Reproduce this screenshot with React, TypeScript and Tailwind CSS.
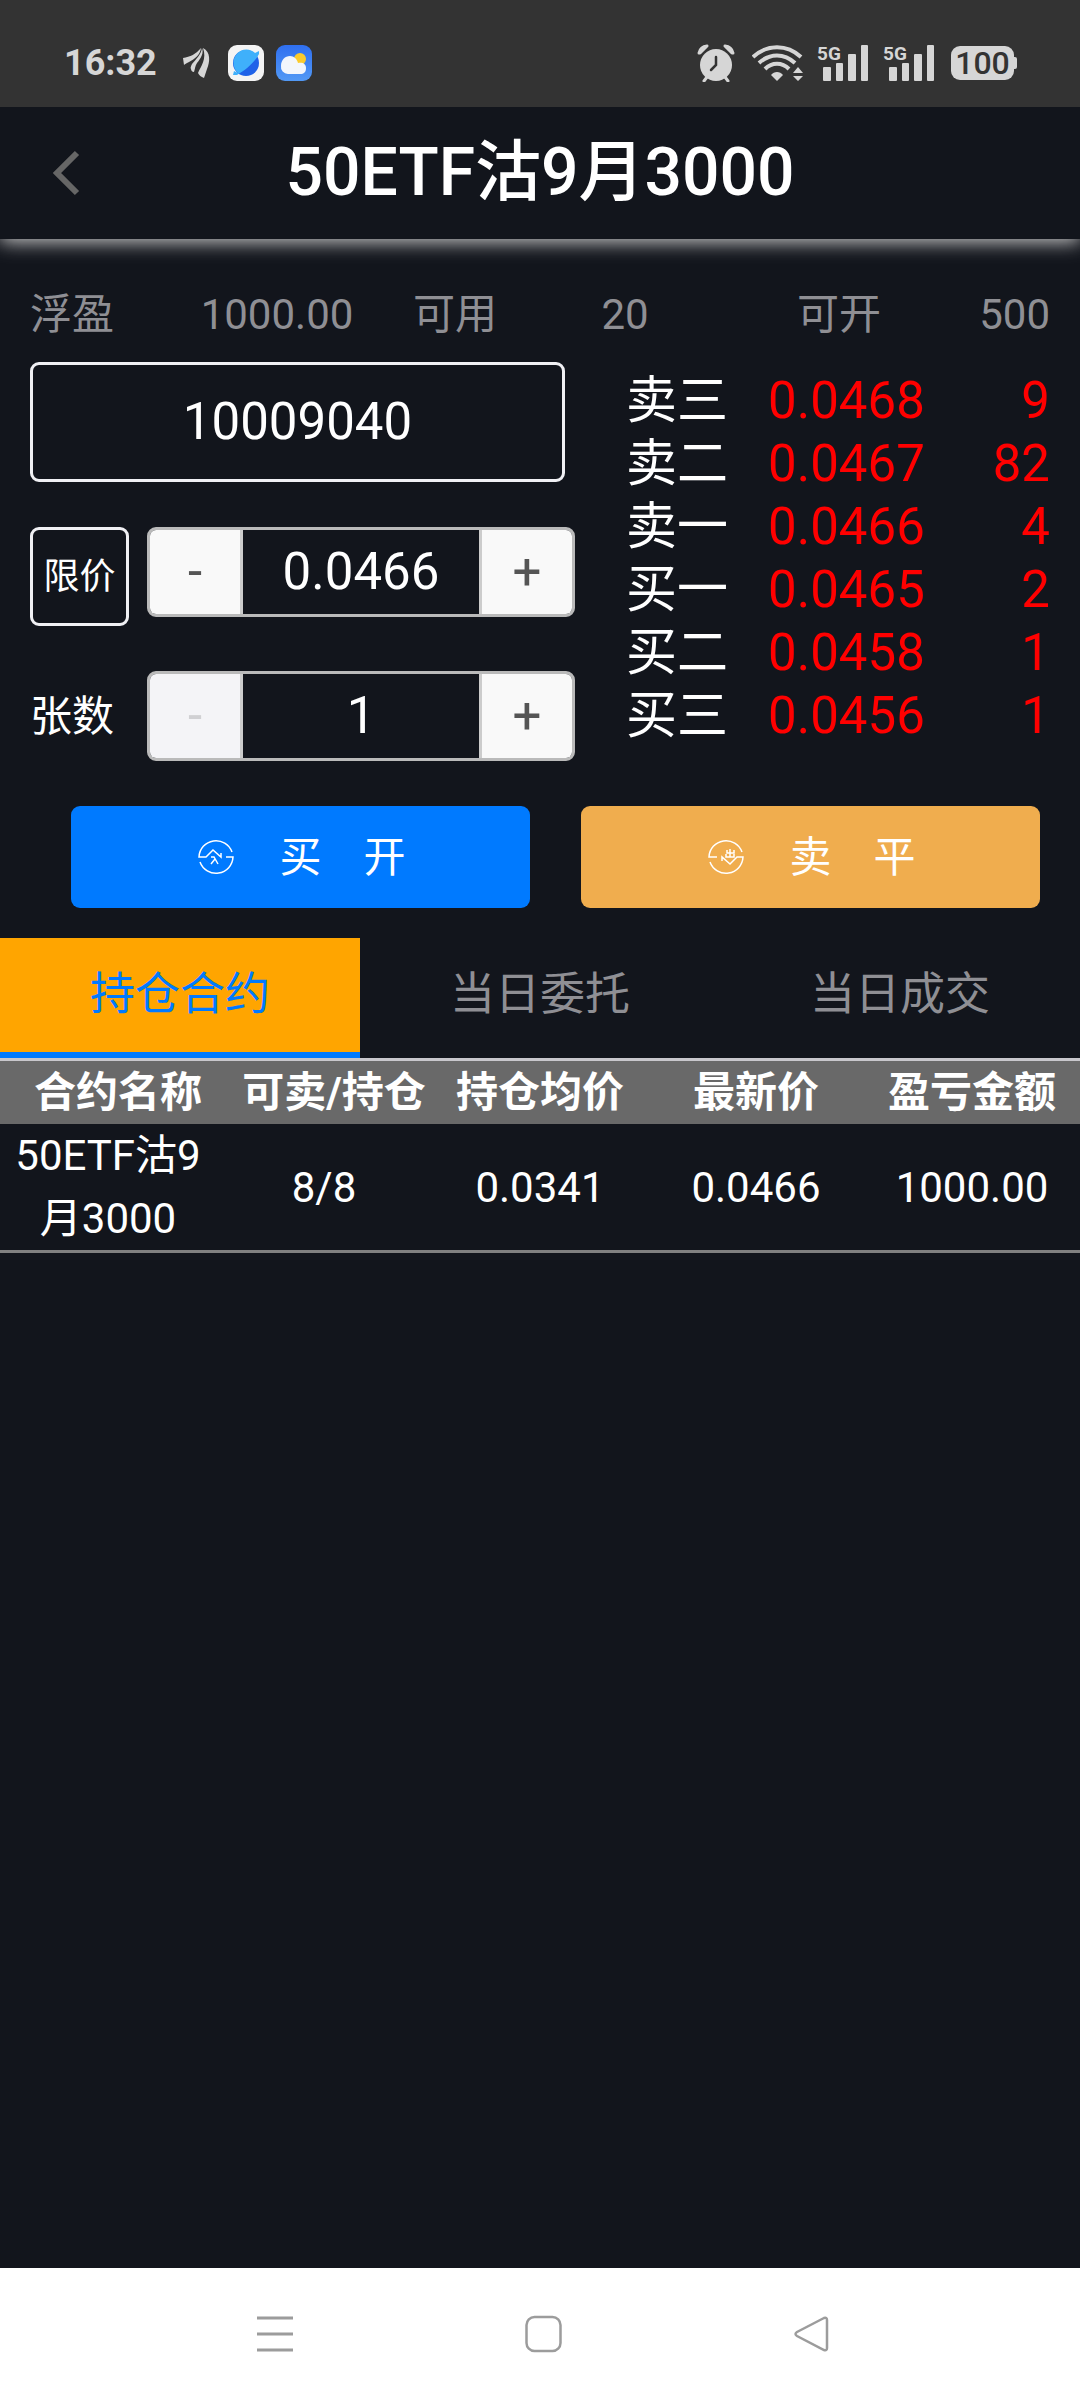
import { useState } from 'react';

const positions = [
    { name: '50ETF沽9月3000', amount: '8/8', avg: '0.0341', last: '0.0466', profit: '1000.00' },
];

const quotes = [
    { label: '卖三', price: '0.0468', volume: 9 },
    { label: '卖二', price: '0.0467', volume: 82 },
    { label: '卖一', price: '0.0466', volume: 4 },
    { label: '买一', price: '0.0465', volume: 2 },
    { label: '买二', price: '0.0458', volume: 1 },
    { label: '买三', price: '0.0456', volume: 1 },
];

const tabs = ['持仓合约', '当日委托', '当日成交'];

function Signal() {
    return (
        <svg className="overflow-visible" width="52" height="38" viewBox="0 0 52 38" fill="#d6d6d6" aria-hidden="true">
            <text x="0" y="16" fontSize="19" fontWeight="700" fontFamily="Roboto, sans-serif">5G</text>
            <rect x="6" y="23" width="8" height="14" rx="1" />
            <rect x="19" y="19" width="7" height="18" rx="1" />
            <rect x="31" y="10" width="8" height="27" rx="1" />
            <rect x="44" y="1" width="7" height="36" rx="1" />
        </svg>
    );
}

function StatusBar() {
    return (
        <div className="relative z-10 flex h-[107px] items-center justify-between bg-[#333333] pr-[63px] pl-[64px] pt-[18px] text-[#d6d6d6]">
            <div className="flex items-center">
                <span className="text-[36px] font-bold leading-[38px]">16:32</span>
                <svg className="ml-[26px]" width="28" height="32" viewBox="0 0 28 32" fill="#d6d6d6" aria-hidden="true">
                    <path d="M0 11C7 10 13 7 18 1C17 8 12 12 6 15C4 16 2 17 1 18Z" />
                    <path d="M19 1C21 6 18 11 14 16C12 19 12 22 11 25C9 25 8 23 8 22C7 21 8 19 9 17C13 12 18 8 19 1Z" />
                    <path d="M20 1C28 5 27 15 24 22L21 31C18 30 16 28 15 26C18 19 24 12 20 1Z" />
                </svg>
                <svg className="ml-[17px]" width="36" height="36" viewBox="0 0 36 36" aria-hidden="true">
                    <rect width="36" height="36" rx="9" fill="#f4f4f4" />
                    <circle cx="18" cy="18" r="13" fill="#1f62e8" />
                    <path d="M10 28C5 24 4 15 8 10C13 3 22 3 27 8L31 6L31 9C27 17 18 25 9 30L5 30L6 26Z" fill="#3fb0fb" />
                </svg>
                <svg className="ml-[12px]" width="36" height="36" viewBox="0 0 36 36" aria-hidden="true">
                    <defs>
                        <linearGradient id="sky" x1="0" y1="0" x2="0" y2="1">
                            <stop offset="0" stopColor="#2f6ff0" />
                            <stop offset="1" stopColor="#5299f5" />
                        </linearGradient>
                    </defs>
                    <rect width="36" height="36" rx="9" fill="url(#sky)" />
                    <circle cx="24" cy="14" r="6" fill="#fbcb2c" />
                    <path d="M12 29A7 7 0 0 1 5 21C5 15 9 11 14 11C18 11 21 14 22 18C27 17 30 19 30 23C30 27 28 29 24 29Z" fill="#f3f6fc" />
                </svg>
            </div>
            <div className="flex items-center">
                <svg width="38" height="38" viewBox="0 0 38 38" aria-hidden="true">
                    <g stroke="#d6d6d6" strokeWidth="3" strokeLinecap="round">
                        <path d="M10 33L7 37M28 33L31 37" />
                    </g>
                    <path d="M2 9A9 9 0 0 1 10 2L3 9ZM36 9A9 9 0 0 0 28 2L35 9Z" fill="#d6d6d6" stroke="#d6d6d6" strokeWidth="3" strokeLinejoin="round" />
                    <circle cx="19" cy="21" r="16" fill="#d6d6d6" />
                    <path d="M19 13V21L14 26" fill="none" stroke="#333333" strokeWidth="2.5" strokeLinecap="round" />
                </svg>
                <svg className="ml-[17px]" width="52" height="38" viewBox="0 0 52 38" fill="none" stroke="#d6d6d6" strokeWidth="4" aria-hidden="true">
                    <path d="M1 13C15 0 35 0 49 13" />
                    <path d="M7 19C18 9 32 9 43 19" />
                    <path d="M13 25C20 18 30 18 37 25" />
                    <path d="M19 31L25 37L31 31C28 27 22 27 19 31Z" fill="#d6d6d6" stroke="none" />
                    <path d="M41 29L46 23L51 29ZM41 32L46 37L51 32Z" fill="#d6d6d6" stroke="none" />
                </svg>
                <div className="ml-[13px] flex gap-[14px]">
                    <Signal />
                    <Signal />
                </div>
                <div className="ml-[16px] flex items-center">
                    <span className="flex h-[34px] w-[63px] items-center justify-center rounded-[9px] bg-[#d6d6d6] text-[32px] font-medium leading-[34px] text-[#333333]">100</span>
                    <span className="h-[12px] w-[3px] rounded-r-[2px] bg-[#d6d6d6]" />
                </div>
            </div>
        </div>
    );
}

interface StepperProps {
    id: string;
    label: string;
    value: string;
    atMin?: boolean;
    onChange: (value: string) => void;
    onStep: (dir: number) => void;
}

function Stepper({ id, label, value, atMin, onChange, onStep }: StepperProps) {
    return (
        <div className="flex h-[90px] min-w-0 flex-1 overflow-hidden rounded-[9px] border-3 border-[#bababa]">
            <button
                type="button"
                aria-label={`${label}减少`}
                disabled={atMin}
                onClick={() => onStep(-1)}
                className="w-[93px] shrink-0 border-r-3 border-[#cccccc] bg-[#f9f9f9] text-[51px] leading-[84px] text-[#555555] disabled:bg-[#f4f4f7] disabled:text-[#d0d0d3]"
            >
                -
            </button>
            <input
                id={id}
                aria-label={label}
                value={value}
                onChange={e => onChange(e.target.value)}
                className="min-w-0 flex-1 bg-transparent text-center text-[51px] leading-[84px] outline-none"
            />
            <button
                type="button"
                aria-label={`${label}增加`}
                onClick={() => onStep(1)}
                className="w-[93px] shrink-0 border-l-3 border-[#cccccc] bg-[#f9f9f9] text-[51px] leading-[84px] text-[#555555]"
            >
                +
            </button>
        </div>
    );
}

function BuyIcon() {
    return (
        <svg width="36" height="36" viewBox="0 0 36 36" fill="none" stroke="currentColor" strokeWidth="1.5" aria-hidden="true">
            <path d="M34 13A17 17 0 0 0 1 18H8L15 11L23 18V14" />
            <path d="M2 23A17 17 0 0 0 35 18H28" />
            <path d="M13 18H16L20 25M17 20L13 25" />
        </svg>
    );
}

function SellIcon() {
    return (
        <svg width="36" height="36" viewBox="0 0 36 36" fill="none" stroke="currentColor" strokeWidth="1.5" aria-hidden="true">
            <path d="M34 13A17 17 0 0 0 1 18H9" />
            <path d="M2 23A17 17 0 0 0 35 18H29L22 25L14 18V22" />
            <path d="M22 10V18M19 11V14H26V11M18 15V18H26V15" />
        </svg>
    );
}

export default function App() {
    const [code, setCode] = useState('10009040');
    const [price, setPrice] = useState('0.0466');
    const [count, setCount] = useState('1');
    const [tab, setTab] = useState(0);

    return (
        <div className="flex min-h-screen flex-col bg-[#12151c] font-[Roboto,'Noto_Sans_CJK_SC',sans-serif] text-white">
            <StatusBar />

            <header className="grid h-[132px] grid-cols-[1fr_auto_1fr] items-center px-[51px] shadow-[0_3px_18px_#cccccc]">
                <button type="button" aria-label="返回" className="justify-self-start">
                    <svg width="32" height="48" viewBox="0 0 32 48" fill="none" stroke="#666666" strokeWidth="6" aria-hidden="true">
                        <path d="M26 4L6 24L26 44" />
                    </svg>
                </button>
                <h1 className="text-[66px] font-medium leading-[132px]">50ETF沽9月3000</h1>
            </header>

            <main className="flex-1">
                <section className="px-[30px] pt-[44px]">
                    <div className="grid grid-cols-[162fr_170fr_186fr_154fr_274fr_74fr] text-[42px] leading-[63px] text-[#8f8f94]">
                        <span>浮盈</span>
                        <span className="text-center">1000.00</span>
                        <span className="text-center">可用</span>
                        <span className="text-center">20</span>
                        <span className="text-center">可开</span>
                        <span className="text-right">500</span>
                    </div>

                    <div className="mt-[16px] grid grid-cols-[minmax(0,545fr)_minmax(0,424fr)] gap-[51px]">
                        <div>
                            <div className="pr-[10px]">
                                <input
                                    aria-label="合约代码"
                                    value={code}
                                    onChange={e => setCode(e.target.value)}
                                    className="block h-[120px] w-full rounded-[9px] border-3 border-[#f0f0f4] bg-transparent pb-[2px] text-center text-[51px] outline-none"
                                />
                            </div>
                            <div className="mt-[45px] flex gap-[18px]">
                                <button type="button" className="h-[99px] w-[99px] rounded-[9px] border-3 border-[#f0f0f4] text-[36px]">
                                    限价
                                </button>
                                <Stepper
                                    id="price"
                                    label="价格"
                                    value={price}
                                    onChange={setPrice}
                                    onStep={d => setPrice((Number(price) + d * 0.0001).toFixed(4))}
                                />
                            </div>
                            <div className="mt-[45px] flex items-center gap-[18px]">
                                <label htmlFor="count" className="w-[99px] text-[42px]">张数</label>
                                <Stepper
                                    id="count"
                                    label="张数"
                                    value={count}
                                    atMin={Number(count) <= 1}
                                    onChange={setCount}
                                    onStep={d => setCount(String(Number(count) + d))}
                                />
                            </div>
                        </div>

                        <table className="mt-[7px] h-[378px] w-full table-fixed text-[51px] leading-[63px]">
                            <tbody>
                                {quotes.map(q => (
                                    <tr key={q.label}>
                                        <th scope="row" className="w-[30%] p-0 text-left font-normal whitespace-nowrap">{q.label}</th>
                                        <td className="w-[44%] p-0 text-center text-[#ff0000]">{q.price}</td>
                                        <td className="p-0 text-right text-[#ff0000]">{q.volume}</td>
                                    </tr>
                                ))}
                            </tbody>
                        </table>
                    </div>
                </section>

                <div className="mt-[45px] grid grid-cols-2 gap-[51px] pr-[40px] pl-[71px] text-[42px]">
                    <button type="button" className="flex h-[102px] items-center justify-center gap-[45px] rounded-[9px] bg-[#007aff] pl-[3px]">
                        <BuyIcon />
                        <span>买　开</span>
                    </button>
                    <button type="button" className="flex h-[102px] items-center justify-center gap-[45px] rounded-[9px] bg-[#f0ad4e] pl-[3px]">
                        <SellIcon />
                        <span>卖　平</span>
                    </button>
                </div>

                <div role="tablist" className="mt-[30px] grid grid-cols-3 border-b-3 border-[#c8c7cc] text-[45px]">
                    {tabs.map((name, i) => (
                        <button
                            key={name}
                            type="button"
                            role="tab"
                            aria-selected={i === tab}
                            onClick={() => setTab(i)}
                            className={
                                i === tab
                                    ? 'h-[120px] border-b-6 border-[#007aff] bg-[#ffa500] text-[#007aff]'
                                    : 'h-[120px] border-b-6 border-transparent text-[#8f8f94]'
                            }
                        >
                            {name}
                        </button>
                    ))}
                </div>

                <table className="w-full table-fixed text-center text-[42px] leading-[63px]">
                    <thead className="bg-[#696969]">
                        <tr>
                            <th className="p-0 pl-5">合约名称</th>
                            <th className="p-0 pl-5 whitespace-nowrap">可卖/持仓</th>
                            <th className="p-0">持仓均价</th>
                            <th className="p-0">最新价</th>
                            <th className="p-0">盈亏金额</th>
                        </tr>
                    </thead>
                    <tbody>
                        {positions.map(p => (
                            <tr key={p.name} className="border-b-3 border-[#808080]">
                                <td className="p-0">{p.name}</td>
                                <td className="p-0">{p.amount}</td>
                                <td className="p-0">{p.avg}</td>
                                <td className="p-0">{p.last}</td>
                                <td className="p-0">{p.profit}</td>
                            </tr>
                        ))}
                    </tbody>
                </table>
            </main>

            {/* 系统导航栏 */}
            <nav className="flex h-[132px] items-center justify-center gap-[231px] bg-white pl-[6px]">
                <button type="button" aria-label="菜单">
                    <svg width="37" height="38" viewBox="0 0 37 38" stroke="#9c9c9c" strokeWidth="3" aria-hidden="true">
                        <path d="M0 3H36M0 19H36M0 35H36" />
                    </svg>
                </button>
                <button type="button" aria-label="主页">
                    <svg width="37" height="38" viewBox="0 0 37 38" fill="none" stroke="#9c9c9c" strokeWidth="2.5" aria-hidden="true">
                        <rect x="1.5" y="2" width="34" height="34" rx="8" />
                    </svg>
                </button>
                <button type="button" aria-label="后退">
                    <svg width="37" height="38" viewBox="0 0 37 38" fill="none" stroke="#9c9c9c" strokeWidth="2.5" aria-hidden="true">
                        <path d="M31 3L4 17Q1 19 4 21L31 35Q34 36 34 33V5Q34 2 31 3Z" />
                    </svg>
                </button>
            </nav>
        </div>
    );
}
